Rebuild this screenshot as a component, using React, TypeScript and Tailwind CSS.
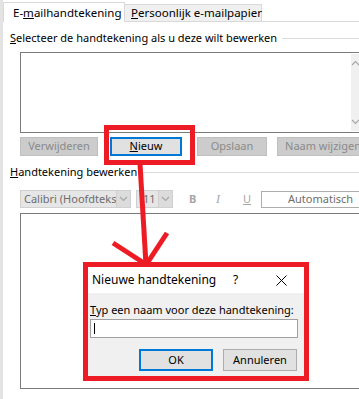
import React from "react";

const RED = "#ed1c24";

function Chevron({ up = false }: { up?: boolean }) {
  return (
    <svg width="9" height="6" viewBox="0 0 9 6" className={up ? "rotate-180" : ""}>
      <path d="M1 1 L4.5 4.5 L8 1" fill="none" stroke="#a6a6a6" strokeWidth="1.2" />
    </svg>
  );
}

function Dropdown({ label, width, pad = "pl-[3px]" }: { label: string; width: string; pad?: string }) {
  return (
    <div className={`flex h-[18px] shrink-0 border border-[#d0d0d0] bg-[#e6e6e6] ${width}`}>
      <span className={`min-w-0 flex-1 overflow-hidden whitespace-nowrap leading-[16px] text-[#6d6d6d] ${pad}`}>
        {label}
      </span>
      <span className="flex w-[14px] shrink-0 items-center justify-center border-l border-[#d0d0d0] bg-[#dcdcdc]">
        <Chevron />
      </span>
    </div>
  );
}

function DisabledButton({ children, width }: { children: React.ReactNode; width: string }) {
  return (
    <div
      className={`flex h-[19px] shrink-0 items-center justify-center whitespace-nowrap border border-[#bfbfbf] bg-[#cccccc] text-[#8a8a8a] ${width}`}
    >
      {children}
    </div>
  );
}

function SectionLabel({ children }: { children: React.ReactNode }) {
  return (
    <div className="flex h-[16px] items-center pl-[7px]">
      <span className="whitespace-nowrap leading-[16px]">{children}</span>
      <span className="ml-[5px] h-px flex-1 bg-[#dcdcdc]" />
    </div>
  );
}

export default function App() {
  return (
    <div className="relative h-[399px] w-[359px] overflow-hidden bg-white font-['Noto_Sans',sans-serif] text-[11px] text-black">
      <div className="flex h-full">
        <div className="w-[3px] shrink-0 bg-[#e3e3e3]" />
        <div className="flex w-[380px] shrink-0 flex-col">
          {/* Tabs */}
          <div className="flex h-[22px] items-end pt-[2px]">
            <div className="flex h-[20px] w-[122px] items-center whitespace-nowrap border-x border-t border-[#d9d9d9] bg-white pl-[9px] text-[11.5px]">
              E-<u>m</u>ailhandtekening
            </div>
            <div className="flex h-[18px] w-[137px] items-center whitespace-nowrap border-y border-r border-[#d9d9d9] bg-[#f0f0f0] pl-[6px] text-[11.5px]">
              <u>P</u>ersoonlijk e-mailpapier
            </div>
            <div className="h-full flex-1 border-b border-[#d9d9d9]" />
          </div>

          <div className="mt-[8px]">
            <SectionLabel>
              <u>S</u>electeer de handtekening als u deze wilt bewerken
            </SectionLabel>
          </div>

          {/* Signature list */}
          <div className="ml-[17px] mt-[6px] flex h-[81px] w-[341px] border border-[#7a7a7a] bg-white p-px">
            <div className="flex-1" />
            <div className="flex w-[8px] flex-col items-center justify-between bg-[#f0f0f0] py-[6px]">
              <Chevron up />
              <Chevron />
            </div>
          </div>

          {/* Buttons */}
          <div className="mt-[4px] flex">
            <DisabledButton width="ml-[17px] w-[78px]">Verwijderen</DisabledButton>
            <div className="ml-[12px] flex h-[19px] w-[72px] shrink-0 items-center justify-center border-2 border-[#0078d7] bg-[#e1e1e1]">
              <u>N</u>ieuw
            </div>
            <DisabledButton width="ml-[15px] w-[70px]">Opslaan</DisabledButton>
            <DisabledButton width="ml-[10px] w-[92px]">Naam wijzigen</DisabledButton>
          </div>

          <div className="mt-[8px]">
            <SectionLabel>
              <u>H</u>andtekening bewerken
            </SectionLabel>
          </div>

          {/* Formatting toolbar */}
          <div className="mt-[10px] flex items-center pl-[17px]">
            <Dropdown label="Calibri (Hoofdtekst)" width="w-[111px]" />
            <Dropdown label="11" width="ml-[5px] w-[37px]" pad="pl-[6px]" />
            <span className="ml-[16px] w-[27px] shrink-0 font-bold text-[#a6a6a6]">B</span>
            <span className="w-[27px] shrink-0 font-['Liberation_Serif',serif] text-[12px] italic text-[#a6a6a6]">I</span>
            <span className="w-[18px] shrink-0 text-[#a6a6a6] underline">U</span>
            <div className="flex h-[17px] w-[110px] shrink-0 items-center border border-[#adadad] bg-white pl-[26px] text-[#6d6d6d]">
              Automatisch
            </div>
          </div>

          {/* Editor */}
          <div className="ml-[17px] mt-[5px] h-[176px] w-[360px] border border-[#7a7a7a] bg-white" />
        </div>
      </div>

      {/* Annotation: red box around "Nieuw" */}
      <div
        className="pointer-events-none absolute left-[104px] top-[125px] h-[40px] w-[91px] border-[5px]"
        style={{ borderColor: RED }}
      />

      {/* Annotation: arrow */}
      <svg className="pointer-events-none absolute left-0 top-0" width="359" height="399">
        <g stroke={RED} strokeWidth="5" fill="none" strokeLinecap="butt">
          <line x1="140" y1="164" x2="146" y2="265" />
          <line x1="113" y1="243" x2="147" y2="265" />
          <line x1="167" y1="233" x2="146" y2="265" />
        </g>
      </svg>

      {/* Dialog */}
      <div
        className="absolute left-[83px] top-[262px] flex h-[119px] w-[226px] flex-col border-[5px] bg-[#f0f0f0]"
        style={{ borderColor: RED }}
      >
        <div className="flex h-[26px] items-center whitespace-nowrap bg-white pl-[4px]">
          <span className="flex-1 text-[12px]">Nieuwe handtekening</span>
          <span className="w-[43px] text-[12px]">?</span>
          <svg width="11" height="11" viewBox="0 0 11 11" className="mr-[17px]">
            <path d="M0.5 0.5 L10.5 10.5 M10.5 0.5 L0.5 10.5" stroke="#000" strokeWidth="1" />
          </svg>
        </div>
        <div className="flex flex-1 flex-col pl-[2px] pr-[6px]">
          <div className="mt-[9px] whitespace-nowrap leading-[16px]">
            <u>T</u>yp een naam voor deze handtekening:
          </div>
          <div className="mt-[1px] flex h-[19px] items-center border border-[#a0a0a0] bg-white pl-[3px]">
            <span className="h-[11px] w-px bg-black" />
          </div>
          <div className="mt-[11px] flex justify-end pr-px">
            <div className="flex h-[22px] w-[74px] items-center justify-center border-2 border-[#0078d7] bg-[#e1e1e1]">
              OK
            </div>
            <div className="ml-[10px] flex h-[22px] w-[74px] items-center justify-center border border-[#adadad] bg-[#e1e1e1]">
              Annuleren
            </div>
          </div>
        </div>
      </div>
    </div>
  );
}
